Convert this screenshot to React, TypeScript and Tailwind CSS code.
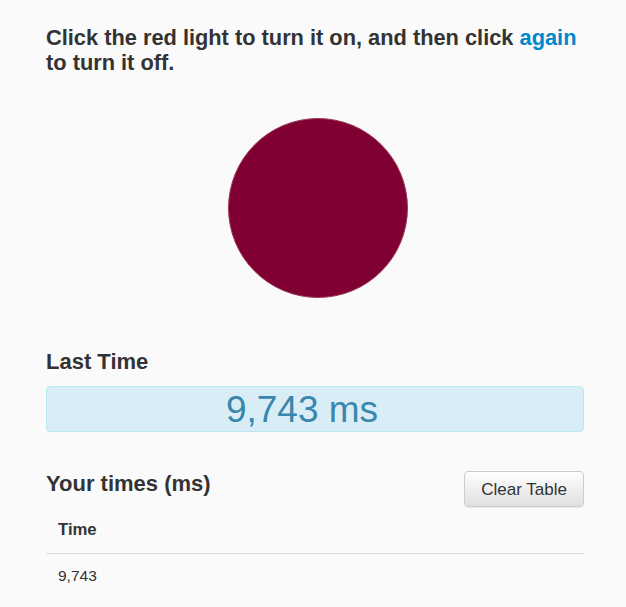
import React from "react";

export default function App() {
  const times = ["9,743"];
  return (
    <div className="min-h-screen bg-[#fafafa] text-[#333] font-['Liberation_Sans',Arial,sans-serif]">
      <div className="w-[538px] ml-[46px] pt-[26px]">
        <h3 className="text-[21.8px] leading-[1.13] font-bold">
          Click the red light to turn it on, and then click{" "}
          <a href="#" className="text-[#0088cc]">again</a> to turn it off.
        </h3>

        <div className="flex justify-center mt-[43px] pl-[5px]">
          <div className="w-[180px] h-[180px] rounded-full bg-[#800033] border border-[#9a3a5c]" />
        </div>

        <h3 className="text-[22px] leading-[1.1] font-bold mt-[52px]">Last Time</h3>
        <div className="mt-[12px] h-[46px] rounded-[4px] border border-[#bce8f1] bg-[#d9edf7] text-[#3a87ad] flex items-center justify-center pr-[26px]">
          <span className="text-[37px] leading-none">9,743 ms</span>
        </div>

        <div className="flex items-start justify-between mt-[39px]">
          <h3 className="text-[22px] leading-[1.1] font-bold mt-[1px]">Your times (ms)</h3>
          <button className="h-[36px] px-[16px] text-[17px] rounded-[4px] border border-[#ccc] bg-gradient-to-b from-white to-[#e0e0e0] text-[#333] shadow-[0_1px_1px_rgba(0,0,0,0.08)]">
            Clear Table
          </button>
        </div>

        <table className="w-full text-[16px]">
          <thead>
            <tr className="border-b border-[#ddd]">
              <th className="text-left text-[16.7px] font-bold px-[12px] pt-[10px] pb-[11px]">Time</th>
            </tr>
          </thead>
          <tbody>
            {times.map((t) => (
              <tr key={t}>
                <td className="px-[12px] pt-[10px] pb-[12px] text-[15.5px]">{t}</td>
              </tr>
            ))}
          </tbody>
        </table>
      </div>
    </div>
  );
}
